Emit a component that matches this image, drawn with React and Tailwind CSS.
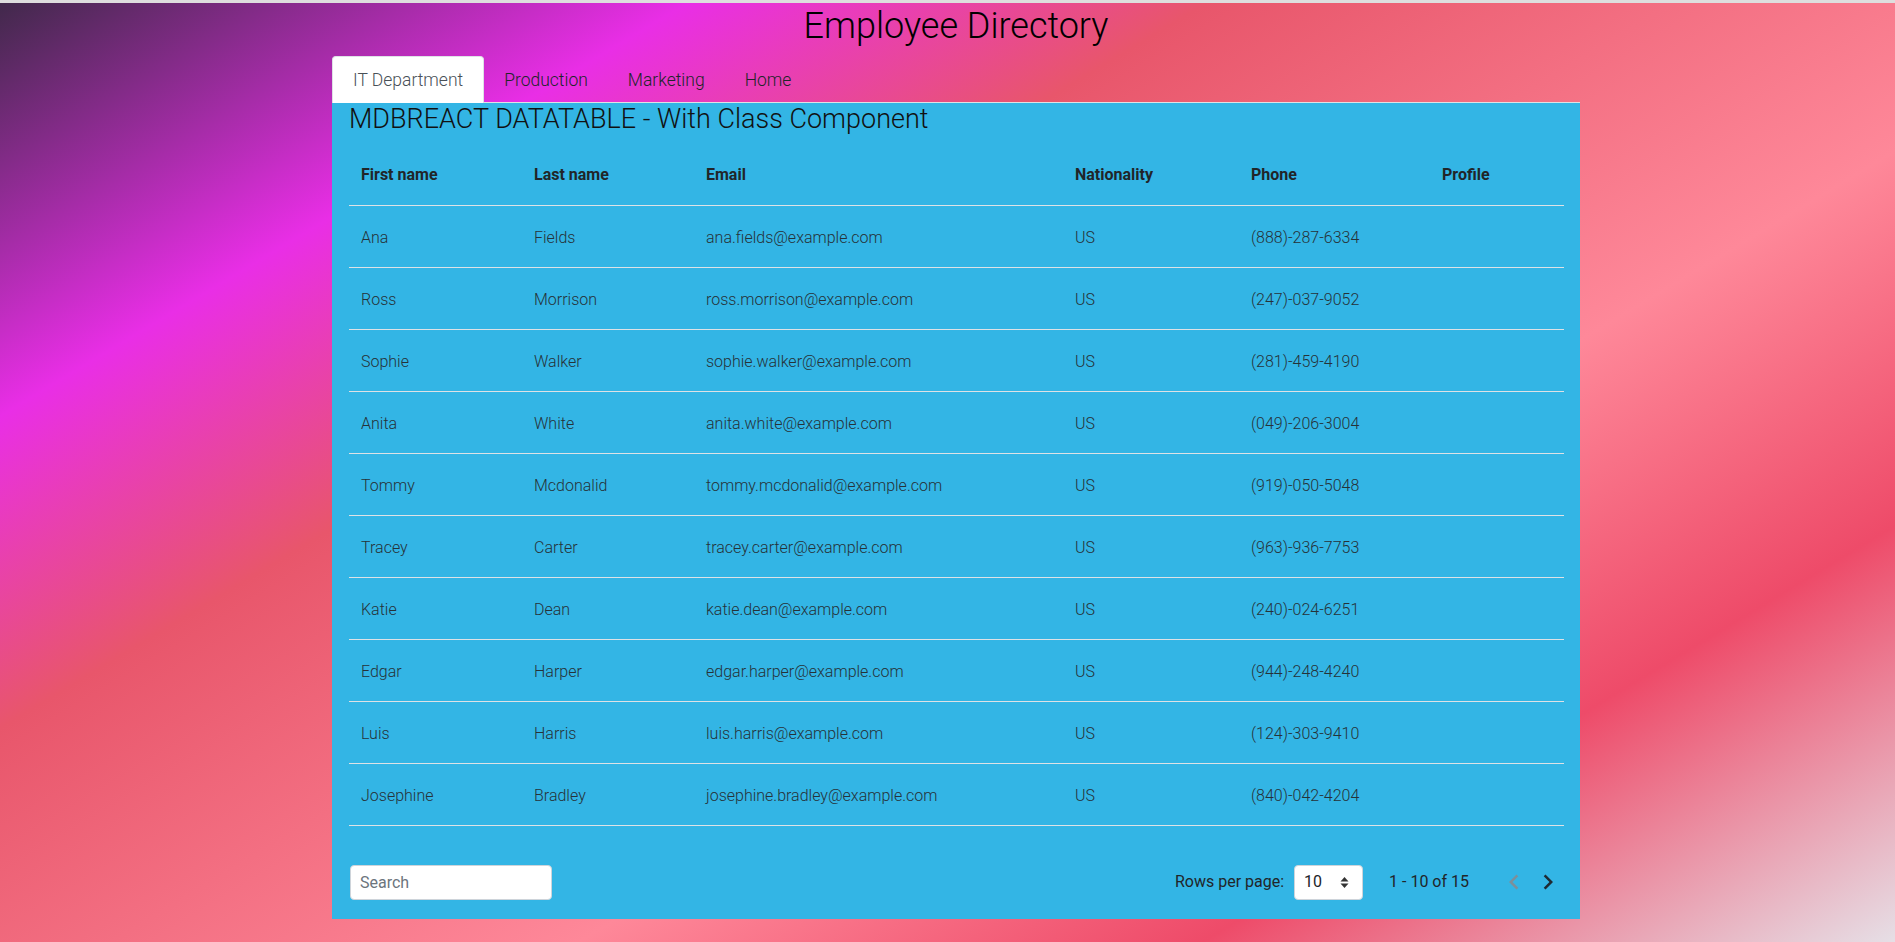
import React from "react";

const employees = [
  { first: "Ana", last: "Fields", email: "ana.fields@example.com", nat: "US", phone: "(888)-287-6334" },
  { first: "Ross", last: "Morrison", email: "ross.morrison@example.com", nat: "US", phone: "(247)-037-9052" },
  { first: "Sophie", last: "Walker", email: "sophie.walker@example.com", nat: "US", phone: "(281)-459-4190" },
  { first: "Anita", last: "White", email: "anita.white@example.com", nat: "US", phone: "(049)-206-3004" },
  { first: "Tommy", last: "Mcdonalid", email: "tommy.mcdonalid@example.com", nat: "US", phone: "(919)-050-5048" },
  { first: "Tracey", last: "Carter", email: "tracey.carter@example.com", nat: "US", phone: "(963)-936-7753" },
  { first: "Katie", last: "Dean", email: "katie.dean@example.com", nat: "US", phone: "(240)-024-6251" },
  { first: "Edgar", last: "Harper", email: "edgar.harper@example.com", nat: "US", phone: "(944)-248-4240" },
  { first: "Luis", last: "Harris", email: "luis.harris@example.com", nat: "US", phone: "(124)-303-9410" },
  { first: "Josephine", last: "Bradley", email: "josephine.bradley@example.com", nat: "US", phone: "(840)-042-4204" },
];

const tabs = ["IT Department", "Production", "Marketing", "Home"];

const rowGrid = "grid grid-cols-[173px_172px_369px_176px_191px_1fr] h-[62px] items-center border-b border-[#dee2e6]";

function SortIcon() {
  return (
    <svg width="9" height="13" viewBox="0 0 9 13" className="text-[#333]">
      <path d="M0.5 5.5 L4.5 1 L8.5 5.5 Z" fill="currentColor" />
      <path d="M0.5 7.5 L8.5 7.5 L4.5 12 Z" fill="currentColor" />
    </svg>
  );
}

function Chevron({ dir }) {
  return (
    <svg width="30" height="30" viewBox="0 0 24 24">
      {dir === "left" ? (
        <path d="M15.41 7.41L14 6l-6 6 6 6 1.41-1.41L10.83 12z" fill="currentColor" />
      ) : (
        <path d="M8.59 16.59L10 18l6-6-6-6-1.41 1.41L13.17 12z" fill="currentColor" />
      )}
    </svg>
  );
}

export default function App() {
  return (
    <div className="min-h-screen h-[942px] font-['Roboto',sans-serif] bg-[linear-gradient(149deg,#40294a_0%,#e92ee6_20%,#e8566b_35%,#fe8899_62%,#ee4b69_80%,#e6dfe6_100%)]">
      <div className="h-[3px] bg-[#dedede]" />
      <div className="pl-[17px]">
        <div className="w-[1248px] mx-auto">
          <h1 className="text-center text-[36px] leading-[1.2] font-light text-black mt-[2px] mb-[8px]">
            Employee Directory
          </h1>

          <div className="flex border-b border-[#dee2e6]">
            {tabs.map((t, i) => (
              <div
                key={t}
                className={
                  i === 0
                    ? "h-[47px] -mb-px px-5 flex items-center text-[17.5px] font-light text-[#495057] bg-white border border-b-0 border-[#dee2e6] rounded-t"
                    : "h-[47px] -mb-px px-5 flex items-center text-[17.5px] font-light text-[#212529]"
                }
              >
                {t}
              </div>
            ))}
          </div>

          <div className="bg-[#33b5e5] pl-[17px] pr-4 pb-[19px]">
            <h3 className="text-[27px] leading-[1.2] font-light text-[#111] mb-2">
              MDBREACT DATATABLE - With Class Component
            </h3>

            <div className="text-[16px] text-[#212529]">
              <div className={rowGrid + " font-bold pt-[2px]"}>
                <div className="pl-3">First name</div>
                <div className="pl-3">Last name</div>
                <div className="pl-3">Email</div>
                <div className="pl-3">Nationality</div>
                <div className="pl-3">Phone</div>
                <div className="pl-3">Profile</div>
              </div>
              {employees.map((e) => (
                <div key={e.email} className={rowGrid + " font-light pt-[4px] text-[#263238]"}>
                  <div className="pl-3">{e.first}</div>
                  <div className="pl-3">{e.last}</div>
                  <div className="pl-3">{e.email}</div>
                  <div className="pl-3">{e.nat}</div>
                  <div className="pl-3">{e.phone}</div>
                  <div className="pl-3"></div>
                </div>
              ))}
            </div>

            <div className="mt-[39px] flex items-center justify-between h-[35px]">
              <input
                placeholder="Search"
                className="ml-px w-[202px] h-[35px] bg-white border border-[#ced4da] rounded px-[9px] text-[16px] text-[#495057] placeholder:text-[#6c757d] outline-none"
              />
              <div className="flex items-center text-[16px] text-[#212529]">
                <span>Rows per page:</span>
                <div className="ml-[10px] w-[69px] h-[35px] bg-white border border-[#ced4da] rounded flex items-center justify-between pl-[9px] pr-[13px]">
                  <span>10</span>
                  <SortIcon />
                </div>
                <span className="ml-[26px]">1 - 10 of 15</span>
                <button className="ml-[27px] w-[35px] h-[35px] flex items-center justify-center text-[#7d8f9a]">
                  <Chevron dir="left" />
                </button>
                <button className="w-[33px] h-[35px] flex items-center justify-center text-[#1f2a33]">
                  <Chevron dir="right" />
                </button>
              </div>
            </div>
          </div>
        </div>
      </div>
    </div>
  );
}
